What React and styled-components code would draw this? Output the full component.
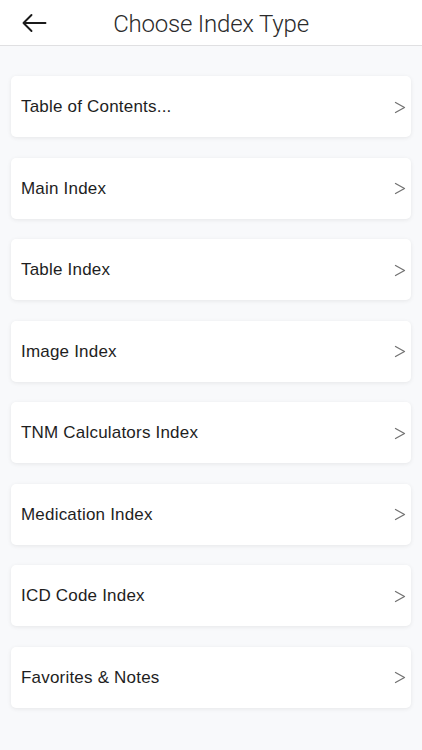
import React from "react";
import styled, { createGlobalStyle } from "styled-components";

const GlobalStyle = createGlobalStyle`
  html, body {
    margin: 0;
    padding: 0;
    background: #f8f9fb;
  }
  * {
    box-sizing: border-box;
  }
`;

const Page = styled.div`
  width: 422px;
  min-height: 750px;
  background: #f8f9fb;
  font-family: "Liberation Sans", Arial, sans-serif;
`;

const Header = styled.header`
  height: 46px;
  display: flex;
  align-items: center;
  justify-content: center;
  position: relative;
  background: #ffffff;
  border-bottom: 1px solid #e0e0e2;
`;

const BackButton = styled.button`
  position: absolute;
  left: 20px;
  top: 10px;
  width: 28px;
  height: 26px;
  padding: 0;
  border: none;
  background: none;
  display: flex;
  align-items: center;
  justify-content: center;
  cursor: pointer;
`;

const Title = styled.h1`
  margin: 0;
  margin-top: 2px;
  font-family: "Roboto", "Liberation Sans", sans-serif;
  font-weight: 300;
  font-size: 24px;
  letter-spacing: -0.2px;
  color: #2b2b2b;
`;

const List = styled.div`
  display: flex;
  flex-direction: column;
  gap: 20.5px;
  padding: 30px 11px 20px;
`;

const Card = styled.div`
  height: 61px;
  display: flex;
  align-items: center;
  justify-content: space-between;
  padding: 0 5px 0 10px;
  background: #ffffff;
  border-radius: 5px;
  box-shadow: 0 1px 4px rgba(0, 0, 0, 0.08);
  cursor: pointer;
`;

const Label = styled.span`
  font-size: 17px;
  color: #1e1e1e;
  letter-spacing: 0.2px;
  margin-top: 1px;
`;

const Chevron = styled.svg`
  width: 12px;
  height: 13px;
  flex-shrink: 0;
  margin-top: 1px;
`;

const items = [
  "Table of Contents...",
  "Main Index",
  "Table Index",
  "Image Index",
  "TNM Calculators Index",
  "Medication Index",
  "ICD Code Index",
  "Favorites & Notes",
];

const App = () => {
  return (
    <Page>
      <GlobalStyle />
      <Header>
        <BackButton aria-label="Back">
          <svg width="26" height="20" viewBox="0 0 26 20" fill="none">
            <path
              d="M24.5 10H2.5M10.5 2L2.5 10L10.5 18"
              stroke="#1a1a1a"
              strokeWidth="1.9"
              strokeLinecap="round"
              strokeLinejoin="round"
            />
          </svg>
        </BackButton>
        <Title>Choose Index Type</Title>
      </Header>
      <List>
        {items.map((item) => (
          <Card key={item}>
            <Label>{item}</Label>
            <Chevron viewBox="0 0 12 13" fill="none">
              <path
                d="M1.5 1.5L10.5 6.5L1.5 11.5"
                stroke="#727272"
                strokeWidth="1.3"
                strokeLinecap="round"
                strokeLinejoin="round"
              />
            </Chevron>
          </Card>
        ))}
      </List>
    </Page>
  );
};

export default App;
